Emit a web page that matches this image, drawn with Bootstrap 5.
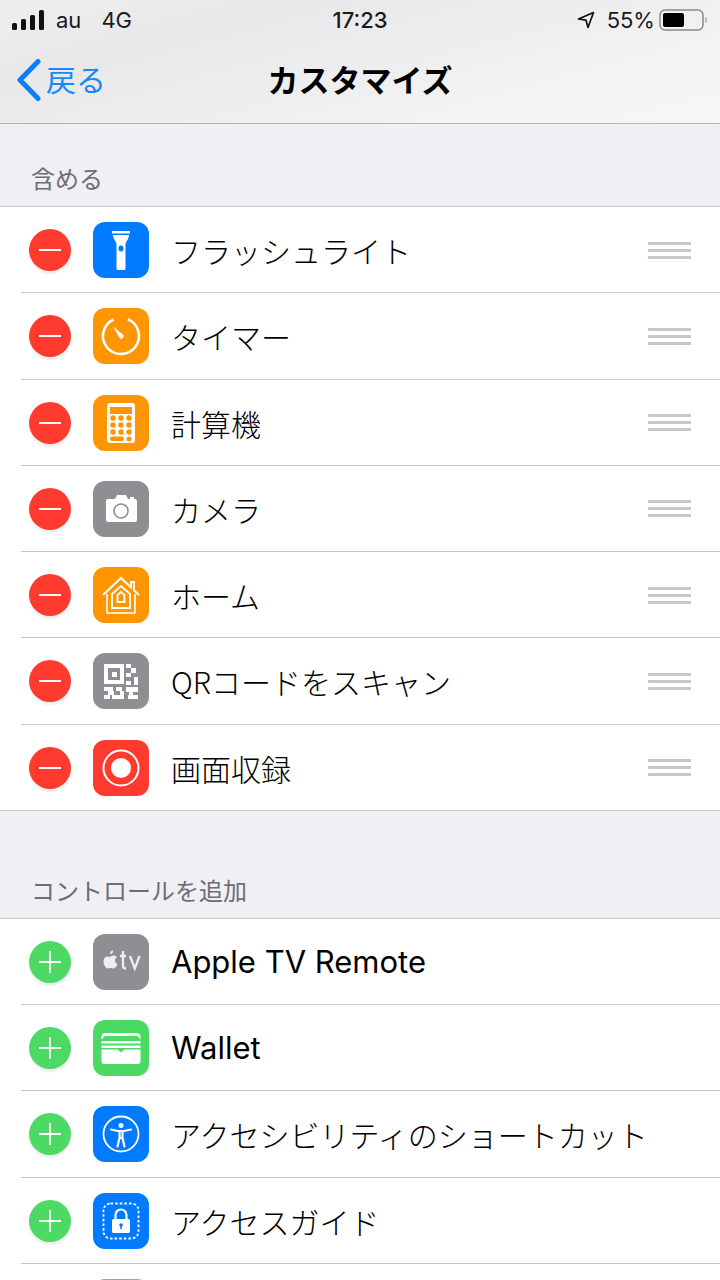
<!DOCTYPE html>
<html lang="ja">
<head>
<meta charset="utf-8">
<title>カスタマイズ</title>
<link rel="stylesheet" href="https://cdn.jsdelivr.net/npm/bootstrap@5.3.0/dist/css/bootstrap.min.css">
<style>
  html, body { height: 1280px; overflow: hidden; }
  body { background: #efeff4; color: #000; font-family: "Inter", "Noto Sans CJK JP", sans-serif; }
  .top-area { height: 124px; background: linear-gradient(165deg, #efeff0 0%, #e8e8ea 25%, #f3f3f4 75%, #f7f7f8 100%); border-bottom: 1px solid #b4b4b8; }
  .status-line { height: 40px; padding: 0 12px; font-size: 22px; color: #1a1a1a; }
  .status-side { width: 300px; }
  .nav-line { height: 83px; }
  .back-link { left: 16px; top: 17px; color: #1b87fb; font-size: 30px; line-height: 46px; text-decoration: none; }
  .page-title { font-size: 31px; font-weight: 700; line-height: 46px; font-family: "Noto Sans CJK JP", sans-serif; }
  .section-title { color: #6d6d72; font-size: 24px; font-family: "Noto Sans CJK JP", sans-serif; line-height: 34px; padding-left: 31px; }
  .first-title { height: 82px; padding-top: 37px; }
  .second-title { height: 107px; padding-top: 62px; }
  .ctl-group { background: #fff; border-top: 1px solid #c8c7cc; }
  .ctl-row { height: 86.25px; padding-left: 29px; }
  .ctl-row-inner { height: 100%; padding-right: 29px; gap: 22px; }
  .row-line { left: 21px; right: 0; bottom: 0; height: 1px; background: #c8c7cc; }
  .row-last .row-line { left: 0; }
  .round-btn { width: 42px; height: 42px; flex: none; border-radius: 50%; box-shadow: 0 3px 2px rgba(0,0,0,.07); }
  .round-btn.is-del { background: #ff3b30; }
  .round-btn.is-add { background: #4cd964; }
  .app-tile { width: 56px; height: 56px; flex: none; border-radius: 12px; }
  .app-tile svg { display: block; }
  .tile-blue { background: #007aff; }
  .tile-orange { background: #ff9500; }
  .tile-gray { background: #8e8e93; }
  .tile-red { background: #ff3b30; }
  .tile-green { background: #4cd964; }
  .ctl-name { font-size: 30px; line-height: 40px; letter-spacing: 0; white-space: nowrap; font-family: "Noto Sans CJK JP", sans-serif; font-weight: 300; }
  .latin-name { font-family: "Inter", sans-serif; font-weight: 400; font-size: 31px; }
  .grip { width: 43px; flex: none; gap: 4px; }
  .grip i { display: block; height: 3px; background: #c7c7cc; }
</style>
</head>
<body>

<div class="top-area">
  <div class="status-line d-flex align-items-center justify-content-between">
    <div class="status-side d-flex align-items-center">
      <svg width="32" height="20" viewBox="0 0 32 20"><rect x="0" y="13" width="5" height="7" rx="1.5" fill="#111"/><rect x="9" y="9" width="5" height="11" rx="1.5" fill="#111"/><rect x="18" y="5" width="5" height="15" rx="1.5" fill="#111"/><rect x="27" y="0" width="5" height="20" rx="1.5" fill="#111"/></svg>
      <span class="ms-2 ps-1">au</span><span class="ms-3 ps-1">4G</span>
    </div>
    <div class="fw-medium">17:23</div>
    <div class="status-side d-flex align-items-center justify-content-end">
      <svg width="18" height="18" viewBox="0 0 18 18"><path d="M16.5 1.5 1.5 8l7.5 1.2L11 16.5z" fill="none" stroke="#111" stroke-width="1.7" stroke-linejoin="round"/></svg>
      <span class="ms-2 ps-1">55%</span>
      <svg class="ms-1" width="49" height="24" viewBox="0 0 49 24"><rect x="1" y="2" width="43" height="20" rx="5" fill="none" stroke="#8b8b8b" stroke-width="1.5"/><rect x="4" y="5" width="21" height="14" rx="2" fill="#000"/><path d="M46.500 9c1.500.4 1.500 5.600 0 6z" fill="#8b8b8b"/></svg>
    </div>
  </div>
  <div class="nav-line position-relative text-center">
    <a class="back-link position-absolute d-flex align-items-center" href="#">
      <svg class="me-1" width="26" height="42" viewBox="0 0 26 42"><path d="M22 2.500 4 21l18 18.500" fill="none" stroke="#0a7dfb" stroke-width="5" stroke-linecap="round" stroke-linejoin="round"/></svg>
      <span>戻る</span>
    </a>
    <div class="page-title pt-3">カスタマイズ</div>
  </div>
</div>

<div class="section-title first-title">含める</div>
<div class="ctl-group" id="includedList"></div>
<div class="section-title second-title">コントロールを追加</div>
<div class="ctl-group" id="addList"></div>

<script>
  const w = '#fff';
  const icons = {
    flash: `<path d="M19 9h18v2.500H19z" fill="${w}"/><path d="M20 13h16c0 4-3 6-3.500 9v24.500q0 1.500-1.500 1.500h-6q-1.500 0-1.500-1.500V22c-.5-3-3.500-5-3.500-9z" fill="${w}"/><ellipse cx="28" cy="26.500" rx="2.500" ry="3" fill="#007aff"/>`,
    timer: `<path d="M28 10a18 18 0 1 1-13 5.500" transform="rotate(22 28 28)" fill="none" stroke="${w}" stroke-width="2.600"/><path d="M20 18.500 30.500 27a2.700 2.700 0 0 1-3.500 3.500z" fill="${w}"/>`,
    calc: `<rect x="14" y="8" width="28" height="40" rx="3" fill="${w}"/><rect x="17" y="12" width="22" height="7" fill="#ff9500"/>` +
      [23,30,37].map(y => [20,28,36].map(x => `<circle cx="${x}" cy="${y}" r="2.700" fill="#ff9500"/>`).join('')).join('') +
      `<rect x="17" y="41.500" width="14" height="4.500" rx="2.200" fill="#ff9500"/><circle cx="36" cy="44" r="2.500" fill="#ff9500"/>`,
    camera: `<path d="M13 20q0-2 2-2h7l2-4h9l2 4h2v-2h4v2h1q2 0 2 2v19q0 2-2 2H15q-2 0-2-2z" fill="${w}"/><circle cx="28" cy="30" r="7" fill="none" stroke="#8e8e93" stroke-width="1.600"/>`,
    home: `<path d="M10 28 28 11l10 9.500V15h3v8.500L46 28" fill="none" stroke="${w}" stroke-width="2"/><path d="M14 27v19h28V27" fill="none" stroke="${w}" stroke-width="1.600"/><path d="M19 27l9-8 9 8v14H19z" fill="none" stroke="${w}" stroke-width="1.800"/><path d="M24.500 28l3.500-3 3.500 3v7h-7z" fill="none" stroke="${w}" stroke-width="1.800"/>`,
    qr: `<path d="M11 11h20v20H11zM15 15v12h12V15zM19 19h5v5h-5zM33 11h5v4h-5zM38 15h5v5h-5zM33 20h5v4h-5zM41 24h4v8h-4zM33 28h5v4h-5zM11 34h9v4h-9zM23 34h6v4h-6zM33 34h12v5H33zM15 38h6v4h-6zM27 38h4v4h-4zM36 39h4v3h-4zM11 42h6v4h-6zM19 42h12v4H19zM35 42h10v4H35z" fill="${w}" fill-rule="evenodd"/>`,
    record: `<circle cx="28" cy="28" r="17.500" fill="none" stroke="${w}" stroke-width="2"/><circle cx="28" cy="28" r="10" fill="${w}"/>`,
    tv: `<path d="M17.500 22c1 0 2-.6 3-.6 1.500 0 2.700.7 3.400 1.800-2.800 1.700-2.300 5.600.6 6.800-.7 1.900-2.200 4.500-3.900 4.500-1 0-1.500-.6-2.800-.6-1.300 0-1.900.6-2.900.6-2.200 0-4.400-4-4.400-7 0-3.300 2-5.100 4-5.100 1.200 0 2.100.6 3 .6zM20.200 16.500c.1 2-1.500 3.700-3.300 3.600-.2-1.800 1.500-3.600 3.300-3.600z" fill="${w}" opacity=".85"/><path d="M30 17v15q0 2.500 3 2.500M27 22h6M37 22l4.800 12.500L46.500 22" fill="none" stroke="${w}" stroke-width="2.300" opacity=".85"/>`,
    wallet: `<path d="M8 23v-6q0-4 4-4h32q4 0 4 4v6" fill="none" stroke="${w}" stroke-width="0"/><path d="M8.500 17q0-4 4-4h31q4 0 4 4v2h-39z" fill="${w}"/><path d="M10 18q0-2 3-2h30q3 0 3 2v1H10z" fill="#4cd964"/><path d="M8.500 21h39v2.500h-39zM8.500 25.500h39V28h-39z" fill="${w}"/><path d="M8.500 29.500h16l3.500 3 3.500-3h16V41q0 3-3 3h-33q-3 0-3-3z" fill="${w}"/>`,
    access: `<circle cx="28" cy="28" r="17.500" fill="none" stroke="${w}" stroke-width="1.800"/><circle cx="28" cy="19.500" r="2.500" fill="${w}"/><path d="M18 23.500l7 1.500h6l7-1.500M26.500 25v7l-2 8.500M29.500 25v7l2 8.500M26.500 32h3" fill="none" stroke="${w}" stroke-width="2.200" stroke-linecap="round"/>`,
    guide: `<rect x="10.500" y="10.500" width="35" height="35" rx="7" fill="none" stroke="${w}" stroke-width="1.800" stroke-dasharray="2.600 2"/><rect x="19" y="26" width="18" height="14" rx="1.500" fill="${w}"/><path d="M22.500 26v-4a5.500 5.500 0 0 1 11 0v4" fill="none" stroke="${w}" stroke-width="2.200"/><circle cx="28" cy="32" r="1.800" fill="#007aff"/><rect x="27.200" y="32" width="1.600" height="4" fill="#007aff"/>`
  };

  const included = [
    ['フラッシュライト', 'tile-blue', icons.flash],
    ['タイマー', 'tile-orange', icons.timer],
    ['計算機', 'tile-orange', icons.calc],
    ['カメラ', 'tile-gray', icons.camera],
    ['ホーム', 'tile-orange', icons.home],
    ['QRコードをスキャン', 'tile-gray', icons.qr],
    ['画面収録', 'tile-red', icons.record]
  ];
  const toAdd = [
    ['Apple TV Remote', 'tile-gray', icons.tv, true],
    ['Wallet', 'tile-green', icons.wallet, true],
    ['アクセシビリティのショートカット', 'tile-blue', icons.access],
    ['アクセスガイド', 'tile-blue', icons.guide],
    ['', 'tile-orange', '']
  ];

  function rowHtml(item, isAdd, isLast) {
    const mark = isAdd
      ? '<path d="M10 21h22M21 10v22" stroke="#fff" stroke-width="2"/>'
      : '<path d="M10 21h22" stroke="#fff" stroke-width="2"/>';
    const grip = isAdd ? '' : '<div class="grip d-flex flex-column"><i></i><i></i><i></i></div>';
    return `<div class="ctl-row position-relative ${isLast ? 'row-last' : ''}">
      <div class="ctl-row-inner d-flex align-items-center">
        <div class="round-btn ${isAdd ? 'is-add' : 'is-del'}"><svg width="42" height="42">${mark}</svg></div>
        <div class="app-tile ${item[1]}"><svg width="56" height="56" viewBox="0 0 56 56">${item[2]}</svg></div>
        <div class="ctl-name flex-grow-1 ${item[3] ? 'latin-name' : ''}">${item[0]}</div>
        ${grip}
      </div>
      <div class="row-line position-absolute"></div>
    </div>`;
  }

  document.getElementById('includedList').innerHTML = included.map((it, i) => rowHtml(it, false, i === included.length - 1)).join('');
  document.getElementById('addList').innerHTML = toAdd.map(it => rowHtml(it, true, false)).join('');
</script>
<script src="https://cdn.jsdelivr.net/npm/bootstrap@5.3.0/dist/js/bootstrap.bundle.min.js"></script>
</body>
</html>
